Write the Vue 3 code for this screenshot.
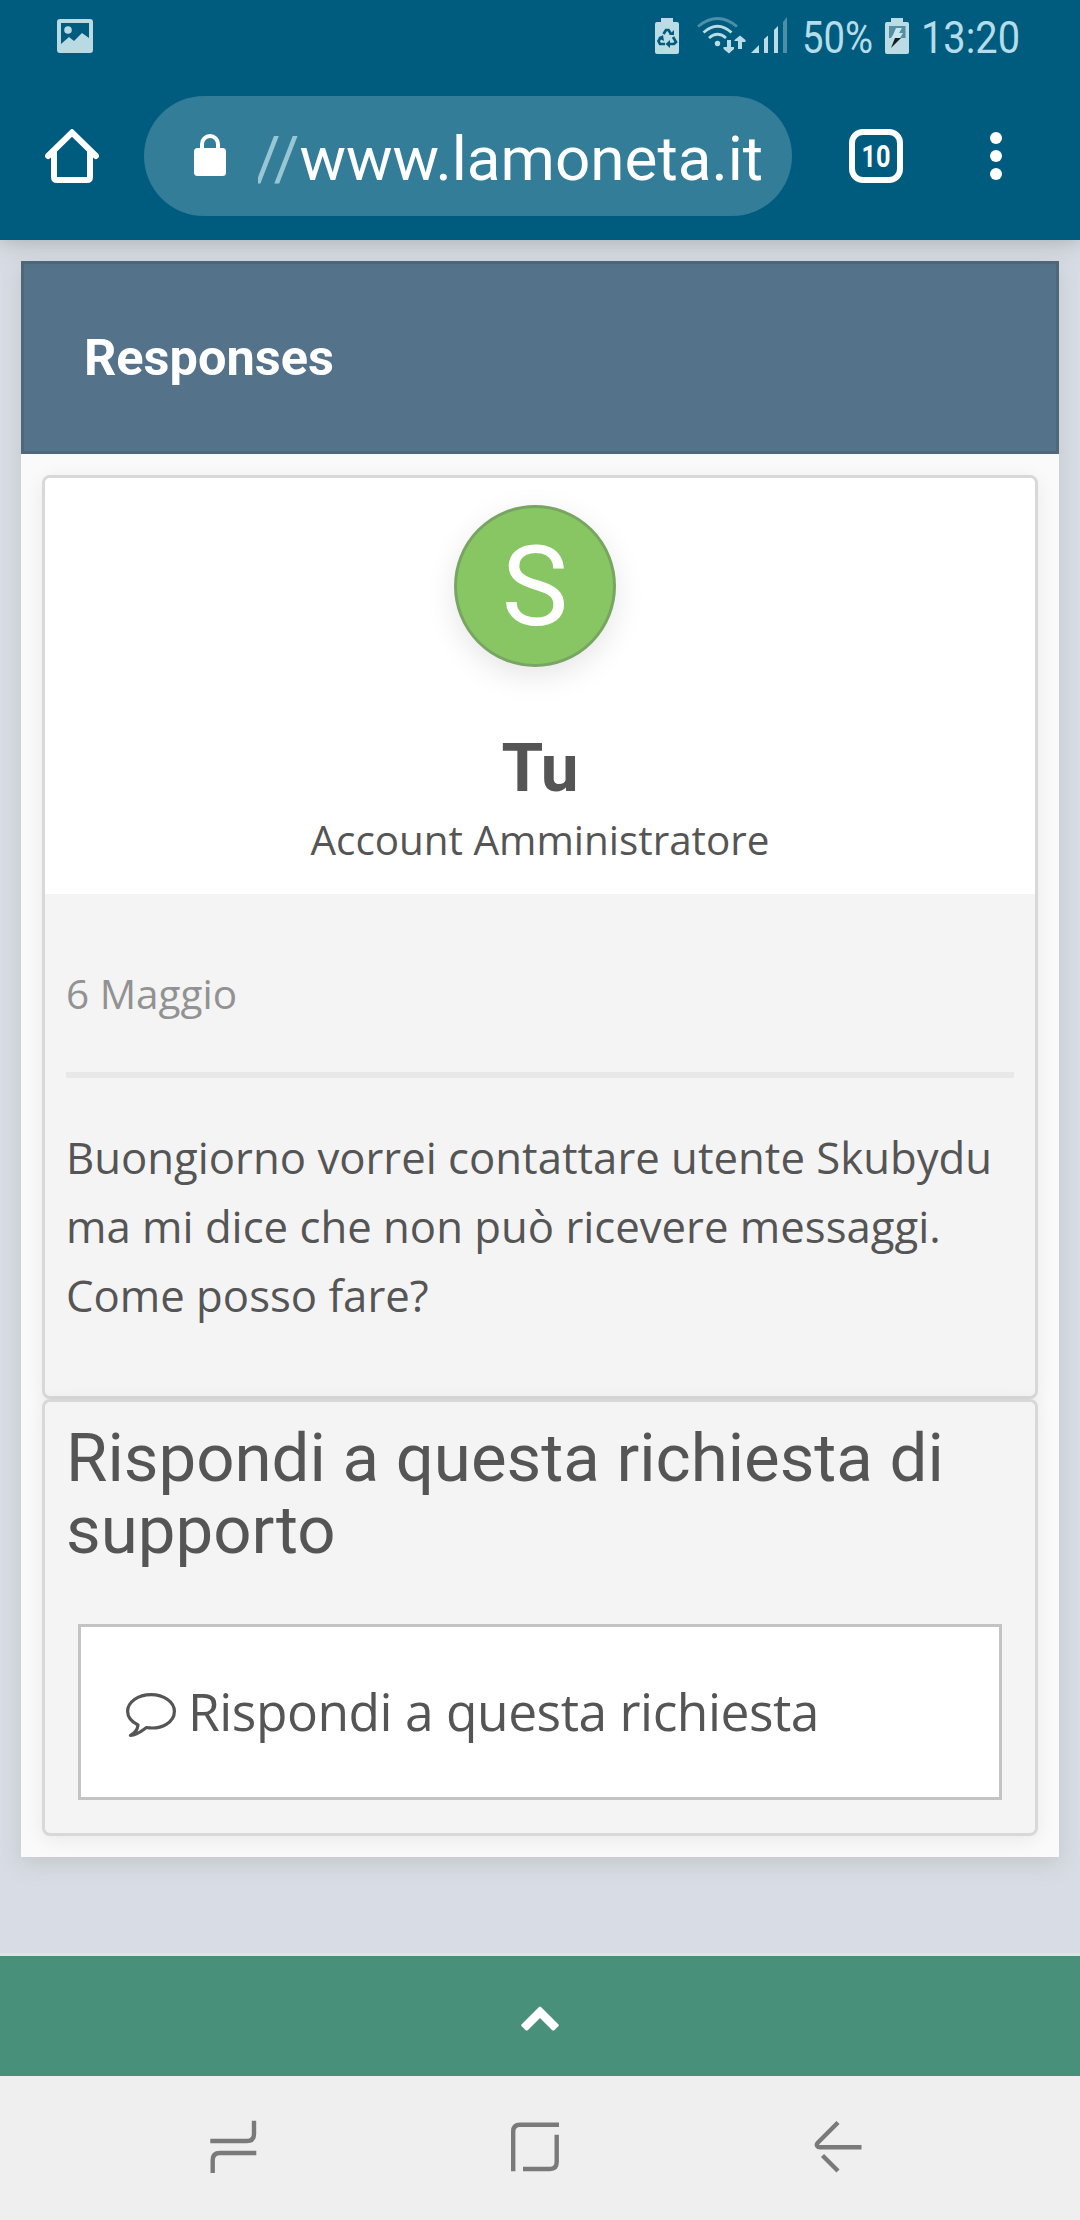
<script setup>
const message = [
  'Buongiorno vorrei contattare utente Skubydu',
  'ma mi dice che non può ricevere messaggi.',
  'Come posso fare?'
]
</script>

<template>
  <div class="screen">
    <header class="top">
      <div class="status">
        <svg class="picture" width="36" height="34" viewBox="0 0 36 34">
          <path fill="#b9d9e3" fill-rule="evenodd" d="M3 0H33Q36 0 36 3V31Q36 34 33 34H3Q0 34 0 31V3Q0 0 3 0ZM4 4V25L12 18L17 22L25 14L32 19V4Z" />
          <circle cx="11" cy="11" r="3.8" fill="#b9d9e3" />
        </svg>
        <svg class="indicators" width="400" height="75" viewBox="640 0 400 75">
          <path fill="#bcdce5" d="M661 18H673V22H677Q679 22 679 24V52Q679 54 677 54H657Q655 54 655 52V24Q655 22 657 22H661Z" />
          <g fill="none" stroke="#005c7d" stroke-width="2.7">
            <path d="M663.5 34L666 30H668.5L671 34M673 37L676 42L674 44H669M665 44H660L658.500 41L661 37" />
          </g>
          <path fill="#005c7d" d="M669 35H674V30ZM670 40V48L665.500 44ZM658 38L663 35L664 41Z" />
          <g fill="none" stroke="#b9dce6" stroke-width="2.800">
            <path stroke="#4c90a8" d="M698 26.500Q717.500 10.500 737 26.500" />
            <path d="M703.500 32.500Q717.500 20 731.500 32.500" />
            <path d="M709 38Q717.500 30.500 726 38" />
          </g>
          <circle cx="717.500" cy="43.500" r="2.700" fill="#b9dce6" />
          <path fill="#b9dce6" d="M727 40H731V47H734L734 49L729 53.500L723.500 49V47H727ZM738 49V41H734.500V40L740 35.500L745.500 40V42H742V49Z" />
          <path fill="#bcdce5" d="M751 53L759 45V53ZM764 39L768 35.500V53H764ZM774 30L778 26V53H774Z" />
          <path fill="#4c90a8" d="M783 22L787 17V53H783Z" />
          <text x="802" y="53" textLength="71" lengthAdjust="spacingAndGlyphs">50%</text>
          <path fill="#bcdce5" d="M891 18H903V22H907Q909 22 909 24V52Q909 54 907 54H887Q885 54 885 52V24Q885 22 887 22H891Z" />
          <path fill="#568fa1" d="M889 26H905.500V38H889Z" />
          <path fill="#c8e6ed" d="M896 28H902L899 33H903L900 38H891L893 35Z" />
          <path fill="#111d20" d="M895 38H901L891 48Z" />
          <text x="921" y="53" textLength="99" lengthAdjust="spacingAndGlyphs">13:20</text>
        </svg>
      </div>
      <div class="browser">
        <svg class="home" width="54" height="54" viewBox="0 0 54 54" fill="none" stroke="#fff" stroke-width="6" stroke-linecap="round" stroke-linejoin="round">
          <path stroke-linejoin="miter" d="M3 27L27 3.500L51 27" />
          <path d="M9 24V48Q9 51 12 51H42Q45 51 45 48V24" />
        </svg>
        <div class="url">
          <svg class="lock" width="32" height="42" viewBox="0 0 32 42">
            <rect y="14" width="32" height="28" rx="3.500" fill="#fff" />
            <path d="M8 15V10A8 8 0 0 1 24 10V15" fill="none" stroke="#fff" stroke-width="4" />
          </svg>
          <div class="address"><span class="scheme">//</span><span>www.lamoneta.it</span></div>
        </div>
        <div class="tabs"><svg width="42" height="42"><text class="count" x="6.500" y="31.500" textLength="29" lengthAdjust="spacingAndGlyphs">10</text></svg></div>
        <div class="dots"><i /><i /><i /></div>
      </div>
    </header>

    <main class="page">
      <section class="panel">
        <h2 class="title">Responses</h2>
        <div class="panel-body">
          <article class="card">
            <div class="author">
              <div class="avatar">S</div>
              <h3 class="name">Tu</h3>
              <p class="role">Account Amministratore</p>
            </div>
            <div class="post">
              <p class="date">6 Maggio</p>
              <hr class="rule">
              <p class="message"><span v-for="line in message" :key="line">{{ line }}</span></p>
            </div>
          </article>
          <div class="card reply">
            <h3 class="prompt">Rispondi a questa richiesta di supporto</h3>
            <div class="field">
              <svg class="bubble" width="50" height="44" viewBox="0 0 50 44" fill="none" stroke="#555" stroke-width="3.200" stroke-linejoin="round">
                <path d="M25 1.600C12 1.600 1.600 9 1.600 18.300C1.600 24 6 29 12 32C11.500 37 9 40 4.500 42.400C11.500 42 16 37.500 20.500 34.500C36 37 48.400 29 48.400 18.300C48.400 9 38 1.600 25 1.600Z" />
              </svg>
              <span>Rispondi a questa richiesta</span>
            </div>
          </div>
        </div>
      </section>
    </main>

    <div class="expand">
      <svg width="38" height="25" viewBox="0 0 38 25"><path d="M1 18L18 1Q19 0 20 1L37 18Q38.500 19 37 20.500L33.500 24Q32.500 25 31 24L19 12L7 24Q5.500 25 4.500 24L1 20.500Q-.5 19 1 18Z" fill="#fff" /></svg>
    </div>
    <nav class="keys">
      <svg width="1080" height="144" viewBox="0 2076 1080 144" fill="none" stroke="#7a7a7a" stroke-width="4.400">
        <path d="M210.300 2141H247Q254 2141 254 2134V2120.700M256.300 2153H220Q212.700 2153 212.700 2160V2173" />
        <path d="M559 2124.700H520Q513.200 2124.700 513.200 2131.500V2171.300M523 2169H550Q556.700 2169 556.700 2162V2134.700" />
        <path d="M838 2122.500L818 2142.500C815.500 2145 817.500 2147.200 820 2147.200H861.500M822.500 2155.500L838 2171" />
      </svg>
    </nav>
  </div>
</template>

<style>
body {
  margin: 0;
}
</style>

<style scoped>
.screen {
  width: 1080px;
  height: 2220px;
  display: flex;
  flex-direction: column;
  overflow: hidden;
  background: #d8dde5;
  color: #555;
  font-family: "Open Sans", "Noto Sans", sans-serif;
}
h2, h3, p {
  margin: 0;
}
svg {
  display: block;
  flex: none;
}
.top {
  height: 240px;
  flex: none;
  background: #005c7e;
  box-shadow: 0 0 22px rgba(80, 90, 80, .42);
  position: relative;
}
.status {
  height: 75px;
  display: flex;
  align-items: flex-start;
  justify-content: space-between;
  padding: 0 40px 0 57px;
}
.picture {
  margin-top: 19px;
}
.status text {
  font: 45px Roboto, sans-serif;
  fill: #b5dce9;
}
.browser {
  display: flex;
  align-items: center;
  height: 120px;
  margin-top: 21px;
  padding-left: 45px;
}
.url {
  box-sizing: border-box;
  width: 648px;
  height: 120px;
  margin-left: 45px;
  padding-left: 50px;
  border-radius: 60px;
  background: #337d98;
  display: flex;
  align-items: center;
}
.lock {
  margin-bottom: 3px;
}
.address {
  width: 520px;
  margin-left: 32px;
  overflow: hidden;
  display: flex;
  justify-content: flex-start;
  white-space: nowrap;
  color: #fff;
  font: 62px/90px Roboto, sans-serif;
  padding-top: 5px;
}
.scheme {
  color: #99c6d5;
  margin-left: -3px;
}
.tabs {
  box-sizing: border-box;
  width: 54px;
  height: 54px;
  margin-left: 57px;
  border: 6px solid #fff;
  border-radius: 14px;
}
.count {
  font: bold 31px Roboto, sans-serif;
  fill: #fff;
}
.dots {
  display: flex;
  flex-direction: column;
  gap: 6px;
  margin-left: 87px;
}
.dots i {
  width: 12px;
  height: 12px;
  border-radius: 50%;
  background: #fff;
}
.page {
  height: 1713px;
  flex: none;
  padding: 21px 21px 0;
  box-sizing: border-box;
}
.panel {
  height: 1596px;
  background: #fafafa;
  box-shadow: 0 6px 20px rgba(140, 150, 140, .3);
}
.title {
  box-sizing: border-box;
  height: 193px;
  padding-left: 60px;
  border: 3px solid #4f6879;
  background: #54728a;
  color: #fff;
  font: bold 50.500px/187px Roboto, sans-serif;
}
.panel-body {
  padding: 21px 21px 0;
}
.card {
  box-sizing: border-box;
  height: 924px;
  border: 3px solid #d8d8d8;
  border-radius: 8px;
  background: #f4f4f4;
  box-shadow: 0 4px 20px rgba(0, 0, 0, .07);
}
.author {
  box-sizing: border-box;
  height: 416px;
  padding-top: 27px;
  border-radius: 5px 5px 0 0;
  background: #fff;
  text-align: center;
}
.avatar {
  box-sizing: border-box;
  width: 162px;
  height: 162px;
  margin-left: 409px;
  border: 3px solid #79a562;
  border-radius: 50%;
  background: #88c663;
  box-shadow: 0 9px 30px rgba(0, 0, 0, .1);
  color: #fff;
  font: 112px/158px Roboto, sans-serif;
}
.name {
  margin-top: 61px;
  font: bold 67.500px/80px Roboto, sans-serif;
}
.role {
  padding-top: 1px;
  font-size: 40.400px;
  line-height: 62px;
}
.post {
  padding: 69px 21px 0;
}
.date {
  color: #929292;
  font-size: 40.500px;
  line-height: 62px;
}
.rule {
  height: 6px;
  margin: 47px 0 45px;
  border: 0;
  background: #e8e8e8;
}
.message {
  font-size: 43.700px;
  line-height: 69px;
  white-space: nowrap;
}
.message span {
  display: block;
}
.reply {
  height: 437px;
  padding: 20px 21px 0;
  position: relative;
}
.prompt {
  font: 67.200px/72px Roboto, sans-serif;
}
.field {
  box-sizing: border-box;
  height: 176px;
  margin: 58px 12px 0;
  padding: 0 0 3px 45px;
  border: 3px solid #c3c3c3;
  background: #fff;
  display: flex;
  align-items: center;
  font-size: 51.500px;
  letter-spacing: -.48px;
  white-space: nowrap;
}
.bubble {
  margin: 9px 12px 0 0;
}
.expand {
  box-sizing: border-box;
  height: 123px;
  flex: none;
  border-top: 3px solid #e0e5e4;
  background: #489079;
  display: flex;
  justify-content: center;
  padding-top: 50px;
}
.keys {
  height: 144px;
  background: #efefef;
}
</style>
